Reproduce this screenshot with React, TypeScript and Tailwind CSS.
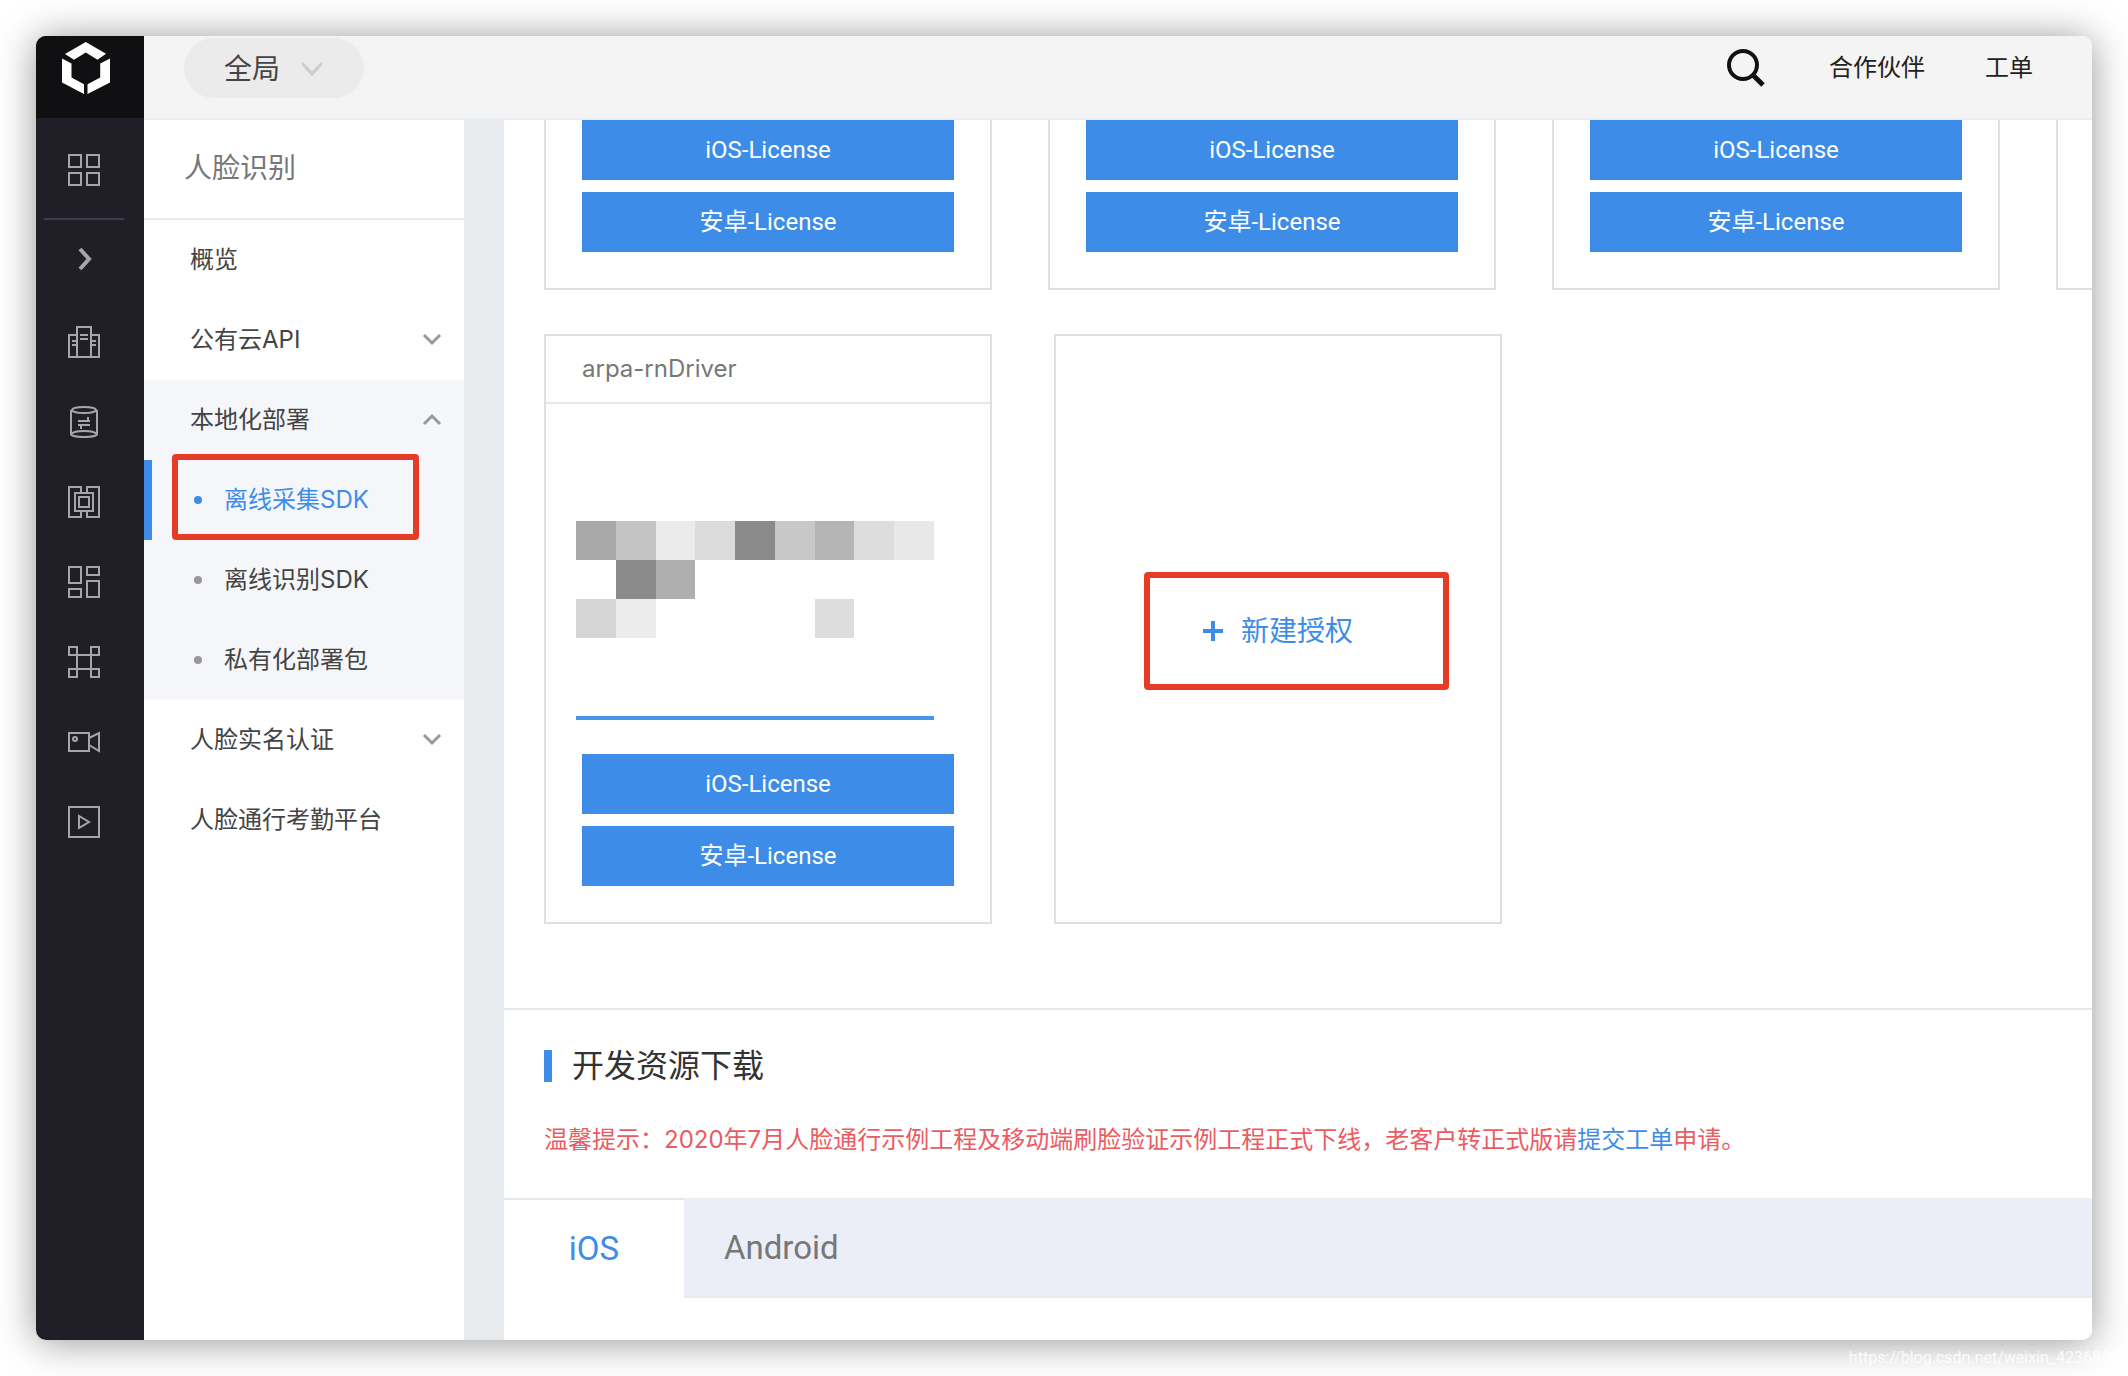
import { useState, type ReactNode } from "react";

const railIcons: { name: string; drawing: ReactNode }[] = [
  {
    name: "企业",
    drawing: (
      <>
        <path d="M9 9H1v22h8M23 9h8v22h-8M12 9h8M12 13h8M4 15h4M4 19h4M24 15h4M24 19h4" />
        <rect x="9" y="1" width="14" height="30" />
      </>
    ),
  },
  {
    name: "数据库",
    drawing: (
      <>
        <ellipse cx="16" cy="4" rx="12" ry="3" />
        <path d="M3 4v24c0 4 26 4 26 0V4M4 28c0-4 24-4 24 0" />
        <path d="M10 15h12M20 11v4M10 19h12M13 19v4" />
      </>
    ),
  },
  {
    name: "芯片",
    drawing: (
      <>
        <path d="M13 6V1H1v30h12v-5M19 6V1h12v30H19v-5" />
        <rect x="7" y="7" width="18" height="18" />
        <rect x="11" y="11" width="10" height="10" />
      </>
    ),
  },
  {
    name: "面板",
    drawing: (
      <>
        <rect x="1" y="1" width="12" height="16" />
        <rect x="1" y="23" width="12" height="8" />
        <rect x="19" y="1" width="12" height="8" />
        <rect x="19" y="15" width="12" height="16" />
      </>
    ),
  },
  {
    name: "网络",
    drawing: (
      <>
        <path d="M1 1h8v30H1v-8h30v8h-8V1h8v8H1z" />
      </>
    ),
  },
  {
    name: "视频",
    drawing: (
      <>
        <rect x="1" y="7" width="20" height="18" />
        <circle cx="7" cy="13" r="2" />
        <path d="M21 12l10-5v18l-10-6" />
      </>
    ),
  },
  {
    name: "播放",
    drawing: (
      <>
        <rect x="1" y="1" width="30" height="30" />
        <path d="M11 10v12l10-6z" />
      </>
    ),
  },
];

const localItems = ["离线采集SDK", "离线识别SDK", "私有化部署包"];

// null leaves the cell blank
const mosaic: (string | null)[] = [
  "#a8a8a8", "#c3c3c3", "#ebebeb", "#dbdbdb", "#8b8b8b", "#c8c8c8", "#b5b5b5", "#dddddd", "#e8e8e8",
  null, "#8b8b8b", "#afafaf", null, null, null, null, null, null,
  "#d6d6d6", "#ececec", null, null, null, null, "#dddddd", null, null,
];

function RailIcon({ children }: { children: ReactNode }) {
  return (
    <svg width="32" height="32" viewBox="0 0 32 32" fill="none" stroke="#a6a6a8" strokeWidth="2">
      {children}
    </svg>
  );
}

function Logo() {
  return (
    <svg width="48" height="52" viewBox="0 0 48 52" fill="#fff">
      <path d="M23.8 0L44 11.7 35.5 17.8 23.8 10.6 12 17.8 3 12z" />
      <path d="M0 16.5l9.5 5v14L22 42.2V52L0 40.5z" />
      <path d="M48 16.5l-9.8 5v14L25.5 42.2V52L48 40.5z" />
    </svg>
  );
}

function Chevron({ up = false }: { up?: boolean }) {
  return (
    <svg width="20" height="14" viewBox="0 0 20 14" fill="none" stroke="#999" strokeWidth="3">
      <path d={up ? "M2 11l8-8 8 8" : "M2 2l8 8 8-8"} />
    </svg>
  );
}

function Rail() {
  return (
    <nav className="flex w-[108px] shrink-0 flex-col bg-[#201f28]">
      <a href="#" aria-label="控制台" className="flex h-[82px] justify-center bg-[#101012] pt-1.5 pr-2">
        <Logo />
      </a>
      <button aria-label="全部产品" className="flex h-[100px] items-center justify-center pt-1 pr-3">
        <RailIcon>
          <rect x="1" y="1" width="12" height="12" />
          <rect x="19" y="1" width="12" height="12" />
          <rect x="1" y="19" width="12" height="12" />
          <rect x="19" y="19" width="12" height="12" />
        </RailIcon>
      </button>
      <hr className="ml-2 w-20 border-t-2 border-[#3d3d49]" />
      <button aria-label="展开" className="flex h-[78px] items-center justify-center pr-2.5">
        <svg width="14" height="24" viewBox="0 0 14 24" fill="none" stroke="#a6a6a8" strokeWidth="4">
          <path d="M2 2l9 10-9 10" />
        </svg>
      </button>
      <div className="pt-1">
        {railIcons.map((icon) => (
          <button key={icon.name} aria-label={icon.name} className="flex h-20 w-full items-center justify-center pr-3">
            <RailIcon>{icon.drawing}</RailIcon>
          </button>
        ))}
      </div>
    </nav>
  );
}

function TopBar() {
  return (
    <header className="flex h-[84px] shrink-0 items-start border-b-2 border-[#e9ecf0] bg-[#f4f4f4] pt-0.5 pr-[59px] pl-10">
      <button className="flex h-[60px] w-[180px] items-center gap-5 rounded-full bg-[#ebebeb] pt-0.5 pl-10 text-[28px] text-[#444]">
        全局
        <svg width="24" height="16" viewBox="0 0 24 16" fill="none" stroke="#ccc" strokeWidth="3">
          <path d="M2 2l10 11L22 2" />
        </svg>
      </button>
      <div className="ml-auto flex h-[60px] items-center text-2xl text-[#222]">
        <button aria-label="搜索">
          <svg width="38" height="38" viewBox="0 0 38 38" fill="none" stroke="#111" strokeWidth="4">
            <circle cx="16" cy="16" r="14" />
            <path d="M25 25l11 11" strokeWidth="5" />
          </svg>
        </button>
        <a href="#" className="ml-16">合作伙伴</a>
        <a href="#" className="ml-[60px]">工单</a>
      </div>
    </header>
  );
}

function Sidebar() {
  const [active, setActive] = useState(localItems[0]);
  const row = "flex h-20 w-full items-center justify-between pl-[46px] pr-[22px] text-left";

  return (
    <aside className="w-80 shrink-0 bg-white text-2xl text-[#444]">
      <h2 className="flex h-[100px] items-center border-b-2 border-[#e7ebee] pl-10 text-[28px] text-[#777]">
        人脸识别
      </h2>
      <a href="#" className={row}>概览</a>
      <button className={row}>
        公有云API
        <Chevron />
      </button>
      <div className="bg-[#f5f6fa]">
        <button className={row}>
          本地化部署
          <Chevron up />
        </button>
        {localItems.map((item) => (
          <button
            key={item}
            onClick={() => setActive(item)}
            className={`relative flex h-20 w-full items-center gap-[22px] border-l-8 pl-[42px] ${
              item === active
                ? "border-[#3d8de8] text-[#3d8de8]"
                : "border-transparent"
            }`}
          >
            <span
              className={`size-2 rounded-full ${
                item === active ? "bg-[#3d8de8]" : "bg-[#999]"
              }`}
            />
            {item}
            {/* Highlight frame */}
            {item === localItems[0] ? (
              <span className="absolute -top-1.5 left-5 h-[86px] w-[247px] rounded-[4px] border-6 border-[#e63c25]" />
            ) : null}
          </button>
        ))}
      </div>
      <button className={row}>
        人脸实名认证
        <Chevron />
      </button>
      <a href="#" className={row}>人脸通行考勤平台</a>
    </aside>
  );
}

function LicenseButtons() {
  return (
    <div className="flex flex-col gap-3 px-9 pb-9 font-[Roboto,'Noto_Sans_CJK_SC',sans-serif] text-2xl text-white">
      <button className="h-[60px] bg-[#3d8de8]">iOS-License</button>
      <button className="h-[60px] bg-[#3d8de8]">安卓-License</button>
    </div>
  );
}

function Licenses() {
  return (
    <section className="border-b-2 border-[#e5e6ee] pb-[84px] pl-10">
      {/* Tail of the row that is scrolled under the top bar */}
      <div className="flex gap-14">
        {[1, 2, 3].map((n) => (
          <div key={n} className="w-[448px] shrink-0 border-2 border-t-0 border-[#e0e0e0]">
            <LicenseButtons />
          </div>
        ))}
        <div className="flex-1 border-b-2 border-l-2 border-[#e0e0e0]" />
      </div>

      <div className="mt-11 flex gap-[62px]">
        <div className="w-[448px] border-2 border-[#e0e0e0]">
          <h3 className="flex h-[68px] items-center border-b-2 border-[#e5e6ee] pl-9 text-2xl text-[#777]">
            arpa-rnDriver
          </h3>
          <div className="w-[388px] pt-[117px] pl-[30px]">
            <div className="grid grid-cols-9">
              {mosaic.map((color, i) => (
                <div key={i} className="h-[39px]" style={{ backgroundColor: color ?? undefined }} />
              ))}
            </div>
            <div className="mt-[78px] mb-[34px] h-1 bg-[#4a94ea]" />
          </div>
          <LicenseButtons />
        </div>

        <div className="relative flex w-[448px] border-2 border-[#e0e0e0]">
          <button className="flex flex-1 items-center justify-center gap-[18px] pt-1 text-[28px] text-[#3d8de8]">
            <svg width="20" height="20" viewBox="0 0 20 20" stroke="#3d8de8" strokeWidth="4">
              <path d="M10 0v20M0 10h20" />
            </svg>
            新建授权
          </button>
          {/* Highlight frame */}
          <span className="pointer-events-none absolute top-[236px] left-[88px] h-[118px] w-[305px] rounded-[4px] border-6 border-[#e63c25]" />
        </div>
      </div>
    </section>
  );
}

function Downloads() {
  const [tab, setTab] = useState("iOS");

  return (
    <section>
      <h2 className="flex items-center gap-5 px-10 pt-10 text-[32px] leading-8 text-[#333]">
        <span className="h-8 w-2 bg-[#3d8de8]" />
        开发资源下载
      </h2>
      <p className="px-10 py-10 text-2xl leading-9 text-[#ec5b62]">
        温馨提示：2020年7月人脸通行示例工程及移动端刷脸验证示例工程正式下线，老客户转正式版请
        <a href="#" className="text-[#3d8de8]">提交工单</a>
        申请。
      </p>
      <div role="tablist" className="flex h-[100px] bg-[#ebeef7] font-[Roboto,sans-serif] text-[33px]">
        {["iOS", "Android"].map((name) => (
          <button
            key={name}
            role="tab"
            aria-selected={name === tab}
            onClick={() => setTab(name)}
            className={`border-t-2 ${
              name === tab
                ? "w-[180px] border-[#e5e6ee] bg-white text-[#3d8de8]"
                : "border-b-2 border-t-[#ebeef7] border-b-[#e8ebf0] px-10 text-[#777]"
            }`}
          >
            {name}
          </button>
        ))}
        <div className="flex-1 border-b-2 border-[#e8ebf0]" />
      </div>
    </section>
  );
}

export default function App() {
  return (
    <div className="relative flex min-h-screen overflow-hidden bg-white p-9 font-[Inter,'Noto_Sans_CJK_SC',sans-serif]">
      <div className="flex min-w-0 flex-1 overflow-hidden rounded-[10px] bg-white shadow-[0_2px_38px_rgba(0,0,0,0.42)]">
        <Rail />
        <div className="flex min-w-0 flex-1 flex-col">
          <TopBar />
          <div className="flex flex-1 bg-[#e7ebee]">
            <Sidebar />
            <main className="ml-10 min-w-0 flex-1 overflow-hidden bg-white">
              <Licenses />
              <Downloads />
            </main>
          </div>
        </div>
      </div>
      <span className="absolute right-0 bottom-1.5 font-[Roboto,sans-serif] text-base text-white/80">
        https://blog.csdn.net/weixin_42368597
      </span>
    </div>
  );
}
